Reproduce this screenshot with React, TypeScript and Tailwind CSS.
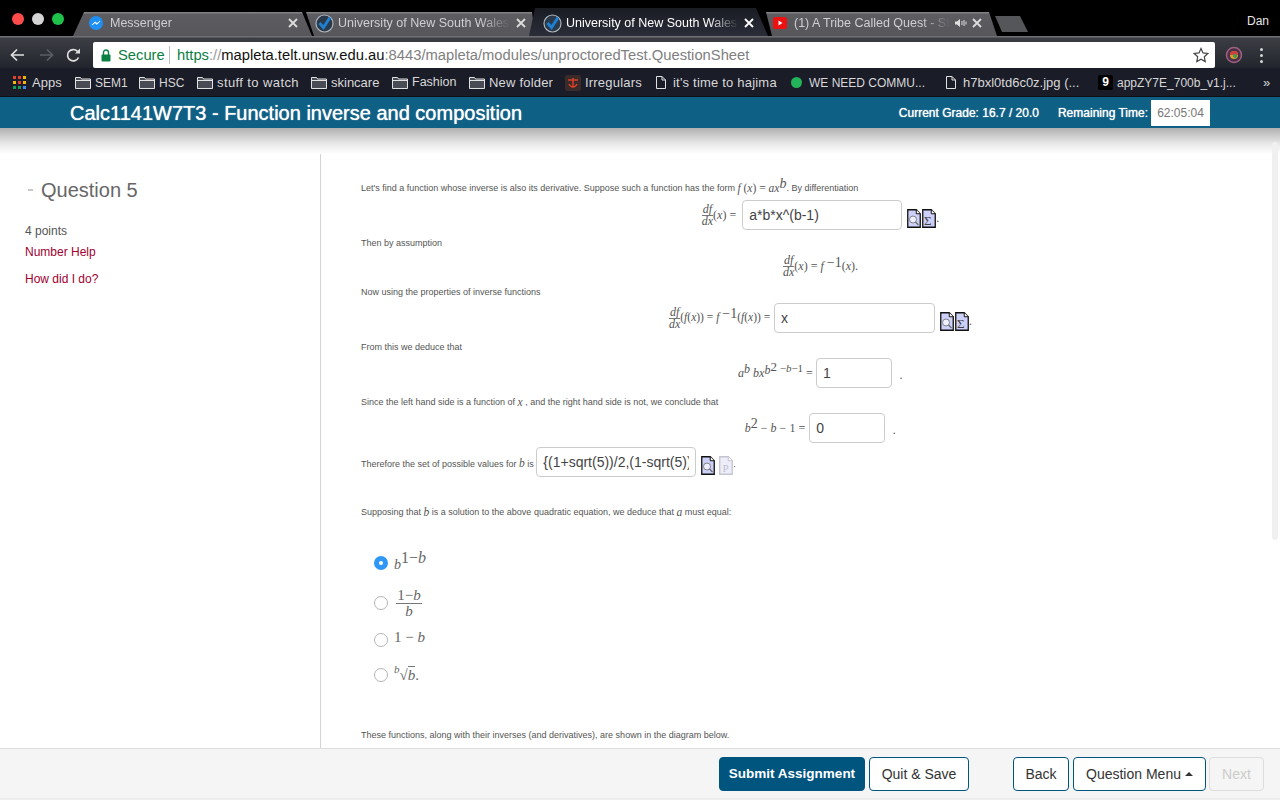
import React from "react";

const sans = "font-['Liberation_Sans',Arial,sans-serif]";
const serif = "font-['Liberation_Serif','Times_New_Roman',serif]";

function Unsw() {
  return (
    <svg width="19" height="19" viewBox="0 0 19 19" className="shrink-0">
      <circle cx="9.500" cy="9.500" r="8.500" fill="#2a3a4a" stroke="#aeb4ba" strokeWidth="1.200" />
      <path d="M4.500 9l4 4.500 6.500-10" fill="none" stroke="#1f7fd0" strokeWidth="3" />
    </svg>
  );
}

function X({ c = "#d8d8d8" }: { c?: string }) {
  return (
    <svg width="10" height="10" viewBox="0 0 10 10" className="shrink-0">
      <path d="M1 1l8 8M9 1l-8 8" stroke={c} strokeWidth="1.800" />
    </svg>
  );
}

function Folder({ ml }: { ml: string }) {
  return (
    <svg width="16" height="14" viewBox="0 0 16 14" className={`shrink-0 ${ml}`}>
      <path d="M.5 12.500V1.500h5l1 1.500h9v9.500z" fill="#4a4c55" stroke="#e2e2e2" />
      <path d="M.5 4.500h15" stroke="#e2e2e2" />
    </svg>
  );
}

function Doc({ ml }: { ml: string }) {
  return (
    <svg width="10" height="13" viewBox="0 0 10 13" className={`shrink-0 ${ml}`}>
      <path d="M.5.5h5.500l3.500 3.500v8.500h-9zM6 .5v3.500h3.500" fill="none" stroke="#e2e2e2" />
    </svg>
  );
}

function Frac({ top, bot, cls = "" }: { top: React.ReactNode; bot: React.ReactNode; cls?: string }) {
  return (
    <span className={`inline-flex flex-col items-center align-middle leading-[11px] ${cls}`}>
      <span className="italic">{top}</span>
      <span className="border-t border-[#777] w-full text-center italic">{bot}</span>
    </span>
  );
}

function FileIcon({ kind }: { kind: "q" | "s" | "p" }) {
  const dim = kind === "p";
  const stroke = dim ? "#c4c4d2" : "#111";
  const fill = dim ? "#eeeefa" : "#cdd0f8";
  return (
    <svg width="14" height="19" viewBox="0 0 14 19" className="shrink-0 mt-[6px]">
      <path d="M.75.75h8.500l4 4v13.500H.75z" fill={fill} stroke={stroke} strokeWidth="1.300" />
      <path d="M9.250.75v4h4" fill="#fff" stroke={stroke} strokeWidth="1" />
      {kind === "q" && (
        <g>
          <circle cx="6" cy="10.500" r="3.500" fill="#eef0ff" stroke="#777" strokeWidth=".9" />
          <path d="M8.500 13l3 3" stroke="#666" strokeWidth="1.100" />
        </g>
      )}
      {kind === "s" && (
        <text x="2" y="16" fontSize="13" fontFamily="Liberation Serif" fill="#444">Σ</text>
      )}
      {kind === "p" && (
        <text x="3.500" y="15.500" fontSize="11" fontFamily="Liberation Serif" fill="#c0c0cc">P</text>
      )}
    </svg>
  );
}

function Answer({ value, w }: { value: string; w: string }) {
  return (
    <input
      readOnly
      value={value}
      className={`${w} ${sans} h-[30px] shrink-0 rounded-[4px] border border-[#cccccc] bg-white pl-[6px] pr-[6px] text-[14px] text-[#444] outline-none`}
    />
  );
}

function Line({ mt, children }: { mt: string; children: React.ReactNode }) {
  return <div className={`${mt} h-[14px] flex items-center whitespace-pre text-[9px] text-[#555] pt-[5px]`}>{children}</div>;
}

function Eq({ mt, children }: { mt: string; children: React.ReactNode }) {
  return (
    <div className={`${mt} h-[30px] flex items-center justify-center whitespace-pre text-[#555] ${serif} text-[12px]`}>
      {children}
    </div>
  );
}

function Radio({ on }: { on?: boolean }) {
  return on ? (
    <span className="w-[14px] h-[14px] rounded-full bg-[#2f97f5] flex items-center justify-center shrink-0">
      <span className="w-[4px] h-[4px] rounded-full bg-white" />
    </span>
  ) : (
    <span className="w-[14px] h-[14px] rounded-full border border-[#b5b5b5] bg-white shrink-0" />
  );
}

function Tab({
  w,
  cls,
  clip,
  active,
  icon,
  text,
  extra,
}: {
  w: string;
  cls: string;
  clip: string;
  active?: boolean;
  icon: React.ReactNode;
  text: string;
  extra?: React.ReactNode;
}) {
  return (
    <div
      className={`${w} ${cls} ${clip} flex items-center shrink-0 ${
        active
          ? "h-[28px] bg-[linear-gradient(#1a1c24,#2a2d38)] pt-[3px] pb-[1px] z-10"
          : "h-[24px] bg-[linear-gradient(#808085_0,#808085_1px,#5c5c61_2px,#56565b_100%)] pb-[2px]"
      }`}
    >
      <div className="w-[18px] flex justify-center shrink-0">{icon}</div>
      <div
        className={`flex-1 min-w-0 overflow-hidden whitespace-nowrap text-[12.5px] ml-[5px] [mask-image:linear-gradient(to_right,black_80%,transparent_97%)] ${
          active ? "text-white font-medium" : "text-[#cfcfd2]"
        }`}
      >
        {text}
      </div>
      {extra}
      <X c={active ? "#ffffff" : "#dcdcdc"} />
    </div>
  );
}

function Btn({ w, cls, children }: { w: string; cls?: string; children: React.ReactNode }) {
  return (
    <div
      className={`${w} h-[34px] rounded-[4px] border flex items-center justify-center shrink-0 ${
        cls ?? "border-[#00557f] bg-white text-[#333] text-[14px]"
      }`}
    >
      {children}
    </div>
  );
}

export default function App() {
  return (
    <div className={`${sans} relative w-[1280px] h-[800px] overflow-hidden flex flex-col bg-white`}>
      {/* tab strip */}
      <div className="h-[36px] shrink-0 bg-black flex items-end pl-[12px] pr-[11px]">
        <div className="flex items-center gap-[8px] self-start mt-[13px] w-[61px] shrink-0">
          <span className="w-[12px] h-[12px] rounded-full bg-[#fc4b4b]" />
          <span className="w-[12px] h-[12px] rounded-full bg-[#d5d5d5]" />
          <span className="w-[12px] h-[12px] rounded-full bg-[#1fc14a]" />
        </div>
        <Tab
          w="w-[239px]"
          cls="pl-[14px] pr-[14px]"
          clip="[clip-path:polygon(11px_0,229px_0,239px_100%,0_100%)]"
          icon={
            <svg width="14" height="14" viewBox="0 0 14 14">
              <circle cx="7" cy="7" r="7" fill="#1e90f5" />
              <path d="M3 9l3-3.200 2 1.600 3-2.400-3 3.400-2-1.600z" fill="#fff" stroke="#fff" strokeWidth=".6" />
            </svg>
          }
          text="Messenger"
        />
        <Tab
          w="w-[229px]"
          cls="-ml-[6px] pl-[9px] pr-[9px]"
          clip="[clip-path:polygon(0_0,226px_0,229px_100%,8px_100%)]"
          icon={<Unsw />}
          text="University of New South Wales"
        />
        <Tab
          w="w-[239px]"
          cls="-ml-[6px] pl-[14px] pr-[14px]"
          clip="[clip-path:polygon(6px_0,227px_0,239px_100%,0_100%)]"
          active
          icon={<Unsw />}
          text="University of New South Wales"
        />
        <Tab
          w="w-[231px]"
          cls="-ml-[2px] pl-[5px] pr-[15px]"
          clip="[clip-path:polygon(0_0,223px_0,231px_100%,6px_100%)]"
          icon={
            <svg width="14" height="12" viewBox="0 0 14 12">
              <rect width="14" height="12" rx="2.500" fill="#ee1111" />
              <path d="M5.500 3.500l4 2.500-4 2.500z" fill="#fff" />
            </svg>
          }
          text="(1) A Tribe Called Quest - Stressed Out"
          extra={
            <svg width="12" height="10" viewBox="0 0 12 10" className="mr-[5px] shrink-0">
              <path d="M0 3.500h2L5 1v8L2 6.500H0z" fill="#e0e0e0" />
              <path d="M7 3v4M9 2v6M11 3.500v3" stroke="#e0e0e0" strokeWidth="1" />
            </svg>
          }
        />
        <div className="w-[33px] h-[16px] -ml-[2px] mb-[4px] bg-[#55565a] shrink-0 [clip-path:polygon(0_0,25px_0,33px_100%,7px_100%)]" />
        <div className="flex-1 self-start flex justify-end mt-[12px] text-[12px] text-[#e6e6e6]">Dan</div>
      </div>

      {/* toolbar */}
      <div className="h-[32px] shrink-0 flex items-end bg-[linear-gradient(#6e7074_0,#6e7074_1px,#3c3e44_2px,#23252e_100%)]">
        <div className="h-[32px] w-[93px] shrink-0 flex items-center pl-[10px]">
          <svg width="15" height="14" viewBox="0 0 15 14" className="mt-[6px]">
            <path d="M14 7H2M7 1.500L1.500 7 7 12.500" fill="none" stroke="#dedede" strokeWidth="1.700" />
          </svg>
          <svg width="15" height="14" viewBox="0 0 15 14" className="ml-[14px] mt-[6px]">
            <path d="M1 7h12M8 1.500L13.500 7 8 12.500" fill="none" stroke="#5c5e66" strokeWidth="1.700" />
          </svg>
          <svg width="15" height="15" viewBox="0 0 15 15" className="ml-[12px] mt-[6px]">
            <path d="M12.500 9.500A5.700 5.700 0 1 1 11.500 3.400" fill="none" stroke="#dedede" strokeWidth="1.700" />
            <path d="M9 5.500h5v-5z" fill="#dedede" />
          </svg>
        </div>
        <div className="w-[1122px] h-[26px] rounded-[2px] bg-white flex items-center shrink-0 pl-[8px] pr-[6px] text-[14.75px]">
          <svg width="10" height="13" viewBox="0 0 10 13" className="shrink-0">
            <path d="M2.500 6V3.500a2.500 2.500 0 0 1 5 0V6" fill="none" stroke="#0b8043" strokeWidth="1.400" />
            <rect x=".5" y="5.500" width="9" height="7" rx="1" fill="#0b8043" />
          </svg>
          <span className="ml-[7px] text-[#0b8043] w-[45px]">Secure</span>
          <span className="mx-[6px] w-px h-[18px] bg-[#bdbdbd]" />
          <span className="ml-[1px] whitespace-pre">
            <span className="text-[#0b8043]">https</span>
            <span className="text-[#9a9a9a]">://</span>
            <span className="text-[#111]">mapleta.telt.unsw.edu.au</span>
            <span className="text-[#808080]">:8443/mapleta/modules/unproctoredTest.QuestionSheet</span>
          </span>
          <svg width="16" height="16" viewBox="0 0 16 16" className="ml-auto">
            <path d="M8 1.500l2 4.400 4.800.6-3.500 3.300.9 4.700L8 12.200l-4.200 2.300.9-4.700L1.200 6.500 6 5.900z" fill="none" stroke="#444" strokeWidth="1.200" />
          </svg>
        </div>
        <div className="flex-1 h-[26px] flex items-center pl-[10px]">
          <svg width="18" height="18" viewBox="0 0 18 18">
            <circle cx="9" cy="9" r="7.500" fill="#4b3048" stroke="#a06080" strokeWidth="1.500" />
            <circle cx="9" cy="9" r="4" fill="#d9a030" />
            <path d="M5 9a4 4 0 0 1 8 0z" fill="#d04040" />
            <circle cx="10" cy="10" r="2" fill="#3f9a50" />
          </svg>
          <span className="ml-[17px] flex flex-col gap-[3px]">
            <span className="w-[3px] h-[3px] rounded-full bg-[#d5d5d5]" />
            <span className="w-[3px] h-[3px] rounded-full bg-[#d5d5d5]" />
            <span className="w-[3px] h-[3px] rounded-full bg-[#d5d5d5]" />
          </span>
        </div>
      </div>

      {/* bookmarks */}
      <div className="h-[29px] shrink-0 bg-[#1a1c28] flex items-center text-[13px] text-[#d8d8d8] whitespace-nowrap pl-[13px] pt-[1px] border-b border-[#0e0f14]">
        <svg width="13" height="13" viewBox="0 0 13 13" className="shrink-0">
          <rect x="0" y="0" width="3" height="3" fill="#e04030" />
          <rect x="5" y="0" width="3" height="3" fill="#e04030" />
          <rect x="10" y="0" width="3" height="3" fill="#f4b400" />
          <rect x="0" y="5" width="3" height="3" fill="#f4b400" />
          <rect x="5" y="5" width="3" height="3" fill="#e04030" />
          <rect x="10" y="5" width="3" height="3" fill="#f4b400" />
          <rect x="0" y="10" width="3" height="3" fill="#0f9d58" />
          <rect x="5" y="10" width="3" height="3" fill="#0f9d58" />
          <rect x="10" y="10" width="3" height="3" fill="#4285f4" />
        </svg>
        <span className="ml-[6px] w-[29px]">Apps</span>
        <Folder ml="ml-[14px]" />
        <span className="ml-[4px] w-[32px] text-[12px]">SEM1</span>
        <Folder ml="ml-[12px]" />
        <span className="ml-[4px] w-[26px] text-[12px]">HSC</span>
        <Folder ml="ml-[12px]" />
        <span className="ml-[4px] w-[81px] tracking-[0.4px]">stuff to watch</span>
        <Folder ml="ml-[13px]" />
        <span className="ml-[4px] w-[49px]">skincare</span>
        <Folder ml="ml-[12px]" />
        <span className="ml-[4px] w-[45px] text-[12.5px]">Fashion</span>
        <Folder ml="ml-[12px]" />
        <span className="ml-[4px] w-[63px] tracking-[0.2px]">New folder</span>
        <svg width="16" height="16" viewBox="0 0 16 16" className="ml-[13px] shrink-0">
          <rect width="16" height="16" rx="2" fill="#3a2a2a" />
          <path d="M3 5h10M8 3v9M4 9c2 4 6 4 8 0" fill="none" stroke="#d8402a" strokeWidth="1.500" />
        </svg>
        <span className="ml-[4px] w-[56px] tracking-[0.2px]">Irregulars</span>
        <Doc ml="ml-[15px]" />
        <span className="ml-[7px] w-[103px] tracking-[0.2px]">it's time to hajima</span>
        <span className="ml-[15px] w-[11px] h-[11px] rounded-full bg-[#24b35a] shrink-0" />
        <span className="ml-[7px] w-[115px] text-[12px]">WE NEED COMMU...</span>
        <Doc ml="ml-[22px]" />
        <span className="ml-[7px] w-[117px] text-[13px]">h7bxl0td6c0z.jpg (...</span>
        <span className="ml-[18px] w-[15px] h-[15px] rounded-[2px] bg-black text-white text-[12px] font-bold leading-[15px] text-center shrink-0">9</span>
        <span className="ml-[4px] w-[118px] text-[12px]">appZY7E_700b_v1.j...</span>
        <span className="ml-[28px] text-[13px]">»</span>
      </div>

      {/* blue header */}
      <div className="h-[31px] shrink-0 bg-[#0e6085] flex items-center text-white pl-[70px] pr-[70px]">
        <div className="text-[20px] [text-shadow:0_0_1px_#fff] whitespace-nowrap">Calc1141W7T3 - Function inverse and composition</div>
        <div className="ml-auto text-[12px] [text-shadow:0_0_1px_#fff] whitespace-nowrap">Current Grade: 16.7 / 20.0</div>
        <div className="ml-[19px] text-[12px] [text-shadow:0_0_1px_#fff] whitespace-nowrap">Remaining Time:</div>
        <div className="ml-[3px] w-[59px] h-[26px] bg-white text-[#777] text-[12px] flex items-center justify-center">62:05:04</div>
      </div>

      {/* shadow */}
      <div className="h-[26px] shrink-0 bg-[linear-gradient(#b0b0b0,#e8e8e8_60%,#ffffff)]" />

      {/* main */}
      <div className="flex-1 min-h-0 flex overflow-hidden">
        <aside className="w-[321px] shrink-0 border-r border-[#d4d4d4] pl-[25px] text-[12px]">
          <div className="mt-[21px] flex items-center h-[30px]">
            <span className="w-[5px] h-[2px] bg-[#c8c8c8] ml-[3px]" />
            <span className="ml-[8px] text-[20px] text-[#666]">Question 5</span>
          </div>
          <div className="mt-[17px] text-[#555] leading-[18px]">4 points</div>
          <div className="mt-[3px] text-[#a00030] leading-[18px]">Number Help</div>
          <div className="mt-[9px] text-[#a00030] leading-[18px]">How did I do?</div>
        </aside>

        <section className="flex-1 min-w-0 pl-[40px]">
          <Line mt="mt-[25px]">
            Let's find a function whose inverse is also its derivative. Suppose such a function has the form{" "}
            <span className={`${serif} text-[11.500px]`}>
              <i>f</i> (<i>x</i>) = <i>ax</i>
              <i className="text-[14px] align-[4px] leading-[0]">b</i>
            </span>{" "}
            . By differentiation
          </Line>
          <Eq mt="mt-[7px]">
            <Frac top="df" bot="dx" />
            <span>(<i>x</i>) = </span>
            <Answer value="a*b*x^(b-1)" w="w-[160px] ml-[3px]" />
            <span className="ml-[5px] flex gap-px"><FileIcon kind="q" /><FileIcon kind="s" /></span>
            <span className="pt-[6px]">.</span>
          </Eq>
          <Line mt="mt-[4px]">Then by assumption</Line>
          <Eq mt="mt-[3px]">
            <Frac top="df" bot="dx" />
            <span>(<i>x</i>) = <i>f</i> <span className="text-[14px] align-[3px] leading-[0]">−1</span>(<i>x</i>).</span>
          </Eq>
          <Line mt="mt-[2px]">Now using the properties of inverse functions</Line>
          <Eq mt="mt-[6px]">
            <Frac top="df" bot="dx" />
            <span className="text-[11.500px]">(<i>f</i>(<i>x</i>)) = <i>f</i> <span className="text-[14px] align-[3px] leading-[0]">−1</span>(<i>f</i>(<i>x</i>)) = </span>
            <Answer value="x" w="w-[161px] ml-[1px]" />
            <span className="ml-[5px] flex gap-px"><FileIcon kind="q" /><FileIcon kind="s" /></span>
            <span className="pt-[6px]">.</span>
          </Eq>
          <Line mt="mt-[5px]">From this we deduce that</Line>
          <Eq mt="mt-[6px]">
            <span><i>a</i><i className="text-[12px] align-[4px] leading-[0]">b</i> <i>bx</i><i className="text-[12px] align-[3px] leading-[0]">b</i><span className="text-[13px] align-[6px] leading-[0]">2</span><span className="align-[5px] text-[11px] leading-[0]"> −<i>b</i>−1</span> = </span>
            <Answer value="1" w="w-[76px] text-[#1a5a80]" />
            <span className="ml-[7px] w-[4px] text-center pt-[3px]">.</span>
          </Eq>
          <Line mt="mt-[5px]">
            Since the left hand side is a function of <i className={`${serif} text-[11.500px]`}>x</i> , and the right hand side is not, we conclude that
          </Line>
          <Eq mt="mt-[6px]">
            <span><i>b</i><span className="text-[14px] align-[4px] leading-[0]">2</span> − <i>b</i> − 1 = </span>
            <Answer value="0" w="w-[76px] ml-[1px]" />
            <span className="ml-[7px] w-[4px] text-center pt-[3px]">.</span>
          </Eq>
          <div className="mt-[4px] h-[30px] flex items-center whitespace-pre text-[9px] text-[#555]">
            <span className="pt-[3px]">Therefore the set of possible values for <i className={`${serif} text-[11.500px]`}>b</i> is </span>
            <Answer value="{(1+sqrt(5))/2,(1-sqrt(5))/2}" w="w-[160px]" />
            <span className="ml-[5px] flex gap-[4px]"><FileIcon kind="q" /><FileIcon kind="p" /></span>
            <span className="pt-[6px]">.</span>
          </div>
          <Line mt="mt-[26px]">
            Supposing that <i className={`${serif} text-[11.500px]`}>b</i> is a solution to the above quadratic equation, we deduce that <i className={`${serif} text-[11.500px]`}>a</i> must equal:
          </Line>
          <div className={`${serif} text-[#666] text-[14px] pl-[13px]`}>
            <div className="mt-[31px] h-[30px] flex items-center gap-[6px]">
              <Radio on />
              <span className="pt-[3px]"><i>b</i><span className="text-[16px] align-[6px] leading-[0]">1−<i>b</i></span></span>
            </div>
            <div className="mt-[7px] h-[36px] flex items-center gap-[8px]">
              <Radio />
              <Frac top={<span className="not-italic text-[15px]">1−<i>b</i></span>} bot={<span className="text-[15px]">b</span>} cls="leading-[15px] w-[26px]" />
            </div>
            <div className="mt-[4px] h-[30px] flex items-center gap-[6px]">
              <Radio />
              <span className="-mt-[5px] text-[15px]">1 − <i>b</i></span>
            </div>
            <div className="mt-[5px] h-[30px] flex items-center gap-[6px]">
              <Radio />
              <span className="text-[15px]"><i className="text-[11px] align-[7px] leading-[0] mr-[4px]">b</i><span className="-ml-[4px]">√</span><i className="border-t border-[#777]">b</i>.</span>
            </div>
          </div>
          <Line mt="mt-[36px]">These functions, along with their inverses (and derivatives), are shown in the diagram below.</Line>
        </section>
      </div>

      {/* footer */}
      <div className="h-[52px] shrink-0 bg-[#f5f5f5] border-t border-[#dddddd] border-b-2 border-b-[#eeeeee] flex items-center pl-[719px] pr-[16px] pt-[1px]">
        <Btn w="w-[146px]" cls="border-[#00557f] bg-[#00557f] text-white font-bold text-[13.500px]">Submit Assignment</Btn>
        <div className="ml-[4px]"><Btn w="w-[100px]">Quit &amp; Save</Btn></div>
        <div className="ml-[44px]"><Btn w="w-[56px]">Back</Btn></div>
        <div className="ml-[4px]">
          <Btn w="w-[133px]">
            Question Menu
            <svg width="8" height="4" viewBox="0 0 8 4" className="ml-[4px]"><path d="M0 4l4-4 4 4z" fill="#333" /></svg>
          </Btn>
        </div>
        <div className="ml-[3px]"><Btn w="w-[55px]" cls="border-[#dddddd] bg-[#f5f5f5] text-[#cccccc] text-[14px]">Next</Btn></div>
      </div>

      {/* page scrollbar overlay */}
      <div className="absolute right-[2px] top-[142px] w-[6px] h-[398px] rounded-[3px] bg-[#f0f0f0]" />
    </div>
  );
}
